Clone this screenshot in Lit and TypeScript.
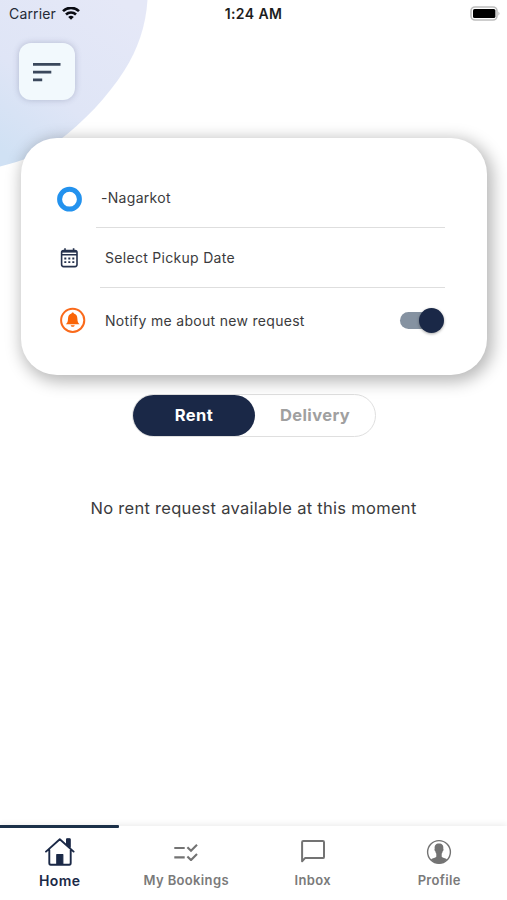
import { LitElement, html, css, svg } from "lit";
import { customElement, property, state } from "lit/decorators.js";
import { classMap } from "lit/directives/class-map.js";

const icons = {
  home: svg`<svg width="30" height="28" viewBox="0 0 30 28" fill="none" stroke="#1b2947" stroke-width="1.9" stroke-linecap="round" stroke-linejoin="round">
    <path d="M1 13.600 14.800 1.200l13.800 12.400M4.300 12v13c0 .9.500 1.700 1.400 1.700h18.600c.9 0 1.400-.8 1.400-1.700V12M22 7V1.200h2.800V9.500"/>
    <path d="M22 1.200h2.800v8L22 6.800z" fill="#1b2947" stroke-width="1"/>
    <path d="M11.800 26.200V16.600h6v9.600z" fill="#1b2947" stroke-width="1.200"/></svg>`,
  bookings: svg`<svg width="24" height="18" viewBox="0 0 24 18" fill="none" stroke="#737373" stroke-width="2.100">
    <path d="M.3 5h10.400M.3 14.400h10.400M13.400 4.200l3.600 3.500 6-6M13.400 13.600l3.600 3.500 6-6"/></svg>`,
  inbox: svg`<svg width="24" height="23" viewBox="0 0 24 23" fill="none" stroke="#737373" stroke-width="2" stroke-linejoin="round">
    <path d="M1.100 21.200V2.300c0-.7.5-1.200 1.200-1.200h19.500c.7 0 1.200.5 1.200 1.200v14.600c0 .7-.5 1.200-1.200 1.200H4z"/></svg>`,
  profile: svg`<svg width="26" height="26" viewBox="0 0 26 26">
    <circle cx="13" cy="13" r="11.400" fill="none" stroke="#737373" stroke-width="1.400"/>
    <path d="M13 4.600c-3.200 0-4.700 2-4.300 5.100-.5.4-.2 2 .5 2.400.2 1.200.6 2 1.100 2.700v2.900c-1 1.200-3.400 1.300-5.400 2.500C7 22.800 10 24.400 13 24.400s6-1.600 8.100-4.200c-2-1.200-4.400-1.300-5.400-2.500v-2.900c.5-.7.9-1.500 1.100-2.700.7-.4 1-2 .5-2.400.4-3.100-1.100-5.100-4.300-5.100z" fill="#737373"/></svg>`,
};

@customElement("nav-tab")
class NavTab extends LitElement {
  @property() label = "";
  @property() icon: keyof typeof icons = "home";
  @property({ type: Boolean }) active = false;

  static styles = css`
    :host { display: block; width: 126.500px; flex: none; }
    .tab { display: flex; flex-direction: column; align-items: center; color: #7a7a7a; }
    .glyph { height: 29px; margin-top: 11px; display: flex; align-items: center; }
    .label { font-size: 13px; font-weight: 600; letter-spacing: .35px; line-height: 18px; margin-top: 5px; white-space: nowrap; }
    .active { color: #1b2947; }
    .active .glyph { margin-top: 11px; }
    .active .label { font-size: 14px; margin-top: 6px; letter-spacing: .4px; }
    svg { display: block; }
  `;

  render() {
    return html`<div class=${classMap({ tab: true, active: this.active })}>
      <div class="glyph">${icons[this.icon]}</div>
      <div class="label">${this.label}</div>
    </div>`;
  }
}

@customElement("app-root")
class AppRoot extends LitElement {
  @state() private mode = "Rent";
  @state() private notify = true;

  static styles = css`
    :host {
      display: flex; flex-direction: column; position: relative; box-sizing: border-box;
      width: 100%; height: 900px; overflow: hidden; background: #fff; color: #3b3b3d;
      font-family: Inter, Roboto, sans-serif;
    }
    svg { display: block; }
    .blob { position: absolute; left: 0; top: 0; }
    .status { position: relative; display: grid; grid-template-columns: 1fr auto 1fr; align-items: center; height: 27px; padding: 0 7px 0 9px; font-size: 14px; }
    .carrier { display: flex; align-items: center; gap: 6px; color: #252a36; letter-spacing: .15px; }
    .time { font-size: 14px; font-weight: 600; color: #1d1d1d; letter-spacing: .4px; margin-right: 2px; }
    .battery { justify-self: end; }
    .menu { position: relative; width: 56px; height: 57px; margin: 16px 0 0 19px; border-radius: 12px; background: #f2f9fd; box-shadow: 0 0 6px rgba(60, 70, 110, .28); display: flex; align-items: center; justify-content: center; }
    .card { position: relative; box-sizing: border-box; width: 466px; height: 237px; margin: 37.500px 0 0 21px; border-radius: 36px; background: #fff; box-shadow: 3px 4px 16px 3px rgba(0, 0, 0, .28); padding: 30px 42px 0 36px; font-size: 14px; letter-spacing: .3px; }
    .row { display: grid; grid-template-columns: 48px 1fr auto; align-items: center; height: 60px; }
    .row.alert { height: 65px; }
    .line { height: 1px; background: #dedede; margin-left: 39px; margin-top: -1px; }
    .line.second { margin-left: 43px; }
    .place { margin-left: -4px; }
    .place, .date { line-height: 20px; }
    .switch { position: relative; width: 44px; height: 26px; display: flex; align-items: center; margin-right: 1.500px; }
    .track { width: 36px; height: 17px; border-radius: 9px; background: #8592a1; }
    .knob { position: absolute; right: 0; top: 1px; width: 25px; height: 25px; border-radius: 50%; background: #1a2847; box-shadow: 0 1px 3px rgba(0, 0, 0, .35); }
    .off .knob { right: 20px; }
    .segments { box-sizing: border-box; width: 244px; height: 43px; margin: 19.500px 0 0 132px; border: 1.500px solid #dfdfdf; border-radius: 22px; display: flex; background: #fff; }
    .segment { flex: 1; display: flex; align-items: center; justify-content: center; font-size: 16.500px; font-weight: 700; letter-spacing: .4px; color: #a0a0a0; border-radius: 22px; padding-bottom: 1px; }
    .selected { background: #1a2847; color: #fff; flex: 0 0 122px; }
    .empty { text-align: center; margin-top: 60px; font-size: 16.500px; line-height: 22px; letter-spacing: .29px; }
    .nav { position: relative; display: flex; height: 74px; margin-top: auto; background: #fff; box-shadow: 0 -2px 6px rgba(0, 0, 0, .07); }
    .tabs { display: flex; margin-left: -3.500px; }
    .marker { position: absolute; left: 0; top: -1px; width: 119px; height: 3px; background: #1b3048; border-radius: 0 1px 1px 0; }
  `;

  render() {
    return html`
      <svg class="blob" width="150" height="168" viewBox="0 0 150 168">
        <defs><linearGradient id="wash" x1=".8" y1="0" x2=".15" y2="1">
          <stop offset="0" stop-color="#e5e8f7"/><stop offset=".6" stop-color="#dfe5f6"/><stop offset="1" stop-color="#d0e1f4"/>
        </linearGradient></defs>
        <path d="M0 0H147.500C146 25 138 49 124 71C108 96 84 122 57 142C40 154 23 161 0 166.500Z" fill="url(#wash)"/>
      </svg>
      <div class="status">
        <div class="carrier"><span>Carrier</span>
          <svg width="18" height="14" viewBox="0 0 18 14" fill="none" stroke="#090b12" stroke-width="2.600">
            <path d="M1 4.100a11.500 11.500 0 0 1 16 0M4 7.500a7.200 7.200 0 0 1 10 0"/>
            <path d="M9 12.800 6.200 10a4 4 0 0 1 5.600 0z" fill="#090b12" stroke="none"/>
          </svg>
        </div>
        <div class="time">1:24 AM</div>
        <svg class="battery" width="30" height="16" viewBox="0 0 30 16">
          <rect x="1" y="1" width="26" height="13" rx="4" fill="#fff" stroke="#bdbdbd" stroke-width="1.600"/>
          <rect x="3" y="3" width="22.400" height="9" rx="1.600" fill="#000"/>
          <path d="M28.400 5.400q2.200 2.200 0 4.400z" fill="#b9b9b9"/>
        </svg>
      </div>
      <div class="menu">
        <svg width="28" height="20" viewBox="0 0 28 20" stroke="#3b485c" stroke-width="2.800">
          <path d="M0 2.400h27.500M0 10.200h18.300M0 17.800h9.200"/>
        </svg>
      </div>
      <div class="card">
        <div class="row">
          <svg width="26" height="31" viewBox="0 0 26 31"><circle cx="12.500" cy="17.200" r="9.900" fill="none" stroke="#2392ee" stroke-width="5"/></svg>
          <span class="place">-Nagarkot</span>
        </div>
        <div class="line"></div>
        <div class="row">
          <svg width="26" height="20" viewBox="0 0 26 20" fill="none" stroke="#26324d" stroke-width="1.600">
            <rect x="4.600" y="2.600" width="15.400" height="16" rx="2"/>
            <path d="M4.600 6.700H20M8 .3v3.200M16.600.3v3.200" />
            <path d="M5 3.700h14.500" stroke-width="1.800"/>
            <path d="M7.300 10.500h2m2 0h2m2 0h2M7.300 14.200h2m2 0h2m2 0h2" stroke-width="1.800"/>
          </svg>
          <span class="date">Select Pickup Date</span>
        </div>
        <div class="line second"></div>
        <div class="row alert">
          <svg width="30" height="34" viewBox="0 0 30 34">
            <circle cx="15.700" cy="17.300" r="11.600" fill="#fff" stroke="#fa6a1b" stroke-width="2"/>
            <path d="M15.700 9.500c.8 0 1.100.5 1.200 1.100 2.300.6 3.400 2.400 3.500 5.200.1 3 .7 4.300 2.200 5.500H8.800c1.500-1.200 2.100-2.500 2.200-5.500.1-2.800 1.200-4.600 3.500-5.200.1-.6.400-1.100 1.200-1.100zM13.700 22.200h4c-.2 2-3.800 2-4 0z" fill="#fa6508"/>
          </svg>
          <span class="notice">Notify me about new request</span>
          <div class=${classMap({ switch: true, off: !this.notify })} @click=${() => (this.notify = !this.notify)}>
            <div class="track"></div><div class="knob"></div>
          </div>
        </div>
      </div>
      <div class="segments">
        ${["Rent", "Delivery"].map((name) => html`<div
          class=${classMap({ segment: true, selected: this.mode === name })}
          @click=${() => (this.mode = name)}>${name}</div>`)}
      </div>
      <div class="empty">No rent request available at this moment</div>
      <div class="nav">
        <div class="marker"></div>
        <div class="tabs">
          <nav-tab label="Home" icon="home" active></nav-tab>
          <nav-tab label="My Bookings" icon="bookings"></nav-tab>
          <nav-tab label="Inbox" icon="inbox"></nav-tab>
          <nav-tab label="Profile" icon="profile"></nav-tab>
        </div>
      </div>
    `;
  }
}
